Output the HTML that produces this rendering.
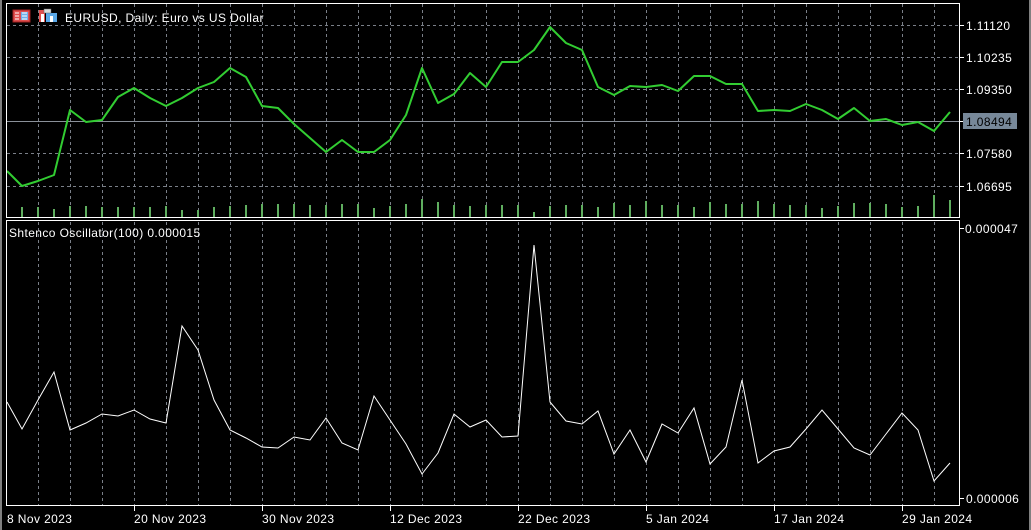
<!DOCTYPE html>
<html><head><meta charset="utf-8"><style>
html,body{margin:0;padding:0;background:#000;width:1031px;height:530px;overflow:hidden}
svg text{font-family:"Liberation Sans",sans-serif;font-size:12px;fill:#fff}
.ax{letter-spacing:0.4px}
</style></head><body>
<svg width="1031" height="530" viewBox="0 0 1031 530" xmlns="http://www.w3.org/2000/svg">
<rect width="1031" height="530" fill="#000"/>
<rect x="0" y="0" width="2" height="530" fill="#808080"/>
<rect x="1029" y="0" width="2" height="530" fill="#808080"/>
<g stroke="#7a7f88" stroke-width="1" stroke-dasharray="3,3" fill="none">
<path d="M38.5 4V217M70.5 4V217M102.5 4V217M134.5 4V217M166.5 4V217M198.5 4V217M230.5 4V217M262.5 4V217M294.5 4V217M326.5 4V217M358.5 4V217M390.5 4V217M422.5 4V217M454.5 4V217M486.5 4V217M518.5 4V217M550.5 4V217M582.5 4V217M614.5 4V217M646.5 4V217M678.5 4V217M710.5 4V217M742.5 4V217M774.5 4V217M806.5 4V217M838.5 4V217M870.5 4V217M902.5 4V217M934.5 4V217"/>
<path d="M38.5 222V505M70.5 222V505M102.5 222V505M134.5 222V505M166.5 222V505M198.5 222V505M230.5 222V505M262.5 222V505M294.5 222V505M326.5 222V505M358.5 222V505M390.5 222V505M422.5 222V505M454.5 222V505M486.5 222V505M518.5 222V505M550.5 222V505M582.5 222V505M614.5 222V505M646.5 222V505M678.5 222V505M710.5 222V505M742.5 222V505M774.5 222V505M806.5 222V505M838.5 222V505M870.5 222V505M902.5 222V505M934.5 222V505"/>
<path d="M7 25.5H960M7 57.5H960M7 89.5H960M7 153.5H960M7 186.5H960"/>
</g>
<path d="M7 121.5H960" stroke="#8a9099" stroke-width="1"/>
<g stroke="#5fae5f" stroke-width="2">
<path d="M22 217v-10M38 217v-10M54 217v-8M70 217v-11M86 217v-11M102 217v-10M118 217v-10M134 217v-10M150 217v-10M166 217v-11M182 217v-7M198 217v-7M214 217v-10M230 217v-11M246 217v-12M262 217v-13M278 217v-13M294 217v-13M310 217v-12M326 217v-12M342 217v-13M358 217v-13M374 217v-9M390 217v-11M406 217v-13M422 217v-18M438 217v-15M454 217v-12M470 217v-11M486 217v-12M502 217v-12M518 217v-12M534 217v-5M550 217v-11M566 217v-12M582 217v-12M598 217v-10M614 217v-14M630 217v-12M646 217v-16M662 217v-12M678 217v-12M694 217v-10M710 217v-15M726 217v-13M742 217v-13M758 217v-16M774 217v-13M790 217v-12M806 217v-12M822 217v-9M838 217v-11M854 217v-14M870 217v-14M886 217v-13M902 217v-10M918 217v-11M934 217v-22M950 217v-17"/>
</g>
<polyline fill="none" stroke="#32cd32" stroke-width="2" stroke-linejoin="round" points="7,171 22,186 38,181 54,175 70,110 86,122 102,120 118,97 134,88 150,98 166,106 182,98 198,88 214,82 230,68 246,77 262,106 278,108 294,124 310,138 326,152 342,140 358,152 374,152 390,140 406,115 422,68 438,103 454,94 470,73 486,87 502,62 518,62 534,50 550,27 566,43 582,50 598,87 614,95 630,86 646,87 662,85 678,91 694,76 710,76 726,84 742,84 758,111 774,110 790,111 806,104 822,110 838,119 854,108 870,121 886,119 902,125 918,122 934,131 950,112"/>
<polyline fill="none" stroke="#fff" stroke-width="1" points="7,402 22,429 38,400 54,372 70,430 86,423 102,414 118,416 134,410 150,419 166,423 182,326 198,350 214,400 230,430 246,438 262,447 278,448 294,437 310,440 326,418 342,443 358,450 374,396 390,420 406,444 422,474 438,453 454,414 470,427 486,420 502,437 518,436 534,245 550,402 566,421 582,424 598,411 614,454 630,430 646,462 662,424 678,433 694,408 710,464 726,447 742,380 758,463 774,451 790,447 806,429 822,410 838,429 854,448 870,455 886,434 902,413 918,430 934,481 950,463"/>
<g fill="none" stroke="#fff" stroke-width="1">
<rect x="6.5" y="3.5" width="953" height="214"/>
<rect x="6.5" y="220.5" width="953" height="285"/>
<path d="M960 25.5h4M960 57.5h4M960 89.5h4M960 121.5h4M960 153.5h4M960 186.5h4M960 228.5h4M960 498.5h4"/>
<path d="M134.5 506v5M262.5 506v5M390.5 506v5M518.5 506v5M646.5 506v5M774.5 506v5M902.5 506v5"/>
</g>
<rect x="963" y="113" width="54" height="16" fill="#778899"/>
<g class="ax">
<text x="966" y="30">1.11120</text>
<text x="966" y="62">1.10235</text>
<text x="966" y="94">1.09350</text>
<text x="966" y="126" style="fill:#000">1.08494</text>
<text x="966" y="158">1.07580</text>
<text x="966" y="191">1.06695</text>
<text x="965" y="233">0.000047</text>
<text x="966" y="503">0.000006</text>
<text x="7" y="523">8 Nov 2023</text>
<text x="134" y="523">20 Nov 2023</text>
<text x="262" y="523">30 Nov 2023</text>
<text x="390" y="523">12 Dec 2023</text>
<text x="518" y="523">22 Dec 2023</text>
<text x="646" y="523">5 Jan 2024</text>
<text x="774" y="523">17 Jan 2024</text>
<text x="902" y="523">29 Jan 2024</text>
<text x="65" y="22">EURUSD, Daily:  Euro vs US Dollar</text>
<text x="9" y="237">Shtenco Oscillator(100) 0.000015</text>
</g>
<g>
<rect x="13" y="10" width="17" height="12" fill="#e05050" stroke="#a02020"/>
<rect x="21" y="12" width="7" height="8" fill="#6fb0e8"/>
<path d="M15 13h4M15 16h4M15 19h4M22 13h5M22 16h5M22 19h5" stroke="#fff" stroke-width="1"/>
<path d="M39 10h6v12h-6z" fill="#e05050"/>
<path d="M46 13h11v9h-11z" fill="#5aa8e8"/>
<rect x="44" y="9" width="7" height="4" fill="#ddd" stroke="#666" stroke-width="0.5"/>
<path d="M41 14h3v8h-3z M50 16h3v6h-3z" fill="#fff"/>
</g>
</svg>
</body></html>
